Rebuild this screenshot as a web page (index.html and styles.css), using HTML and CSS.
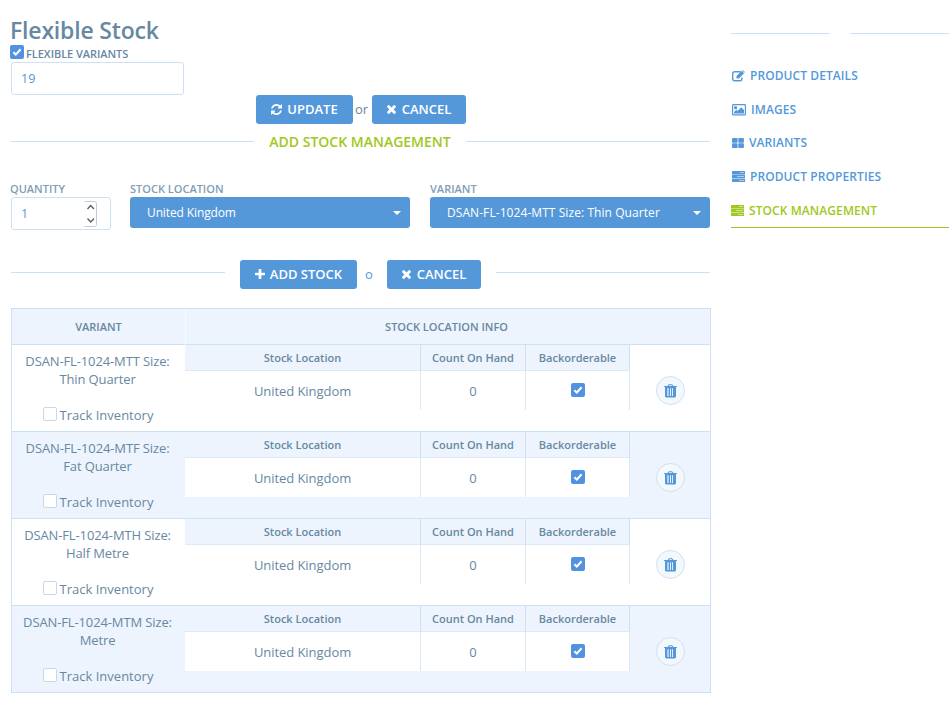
FILE: index.html
```html
<!DOCTYPE html>
<html lang="en">
<head>
<meta charset="utf-8">
<title>Flexible Stock</title>
<link rel="stylesheet" href="styles.css">
</head>
<body>
<svg class="defs" width="0" height="0">
  <symbol id="refresh" viewBox="128 128 1536 1536"><path d="M1639 1056q0 5-1 7-64 268-268 434.5t-478 166.5q-146 0-282.5-55t-243.5-157l-129 129q-19 19-45 19t-45-19-19-45v-448q0-26 19-45t45-19h448q26 0 45 19t19 45-19 45l-137 137q71 66 161 102t187 36q134 0 250-65t186-179q11-17 53-117 8-23 30-23h192q13 0 22.5 9.5t9.500 22.500zm25-800v448q0 26-19 45t-45 19h-448q-26 0-45-19t-19-45 19-45l138-138q-148-137-349-137-134 0-250 65t-186 179q-11 17-53 117-8 23-30 23h-199q-13 0-22.500-9.500t-9.500-22.500v-7q65-268 270-434.500t480-166.500q146 0 284 55.500t245 156.500l130-129q19-19 45-19t45 19 19 45z"/></symbol>
  <symbol id="times" viewBox="302 366 1188 1188"><path d="M1490 1322q0 40-28 68l-136 136q-28 28-68 28t-68-28l-294-294-294 294q-28 28-68 28t-68-28l-136-136q-28-28-28-68t28-68l294-294-294-294q-28-28-28-68t28-68l136-136q28-28 68-28t68 28l294 294 294-294q28-28 68-28t68 28l136 136q28 28 28 68t-28 68l-294 294 294 294q28 28 28 68z"/></symbol>
  <symbol id="plus" viewBox="0 0 11 11"><path d="M4.700 0h1.600q.7 0 .7.700V4h3.300q.7 0 .7.700v1.600q0 .7-.7.700H7v3.300q0 .7-.7.700H4.700q-.7 0-.7-.7V7H.7Q0 7 0 6.300V4.700Q0 4 .7 4H4V.7Q4 0 4.700 0z"/></symbol>
  <symbol id="edit" viewBox="0 0 13 12"><path d="M8.600 1.700H2.700Q.7 1.700.7 3.700v5Q.7 10.700 2.700 10.700h5.200q2 0 2-2V7.500" fill="none" stroke="currentColor" stroke-width="1.400"/><path d="M4.500 6 9.700.8l2.400 2.400-5.200 5.200H4.500zM10.300.5q.6-.5 1.100 0l1.200 1.200q.5.500 0 1.100z"/></symbol>
  <symbol id="image" viewBox="0 0 14 12"><path fill-rule="evenodd" d="M1.200 0h11.600Q14 0 14 1.200v9.100q0 1.200-1.200 1.200H1.200Q0 11.500 0 10.300V1.200Q0 0 1.200 0zM1.200 1.200v9.100h11.600V1.200z"/><circle cx="3.600" cy="3.700" r="1.600"/><path d="M2 9.500V8l2.300-2.300L5.500 7l3.700-3.800L12 6v3.500z"/></symbol>
  <symbol id="variants" viewBox="0 0 12 10"><rect width="5.600" height="4.700" rx=".8"/><rect x="6.300" width="5.600" height="4.700" rx=".8"/><rect y="5.300" width="5.600" height="4.700" rx=".8"/><rect x="6.300" y="5.300" width="5.600" height="4.700" rx=".8"/></symbol>
  <symbol id="tasks" viewBox="0 0 13 11"><rect width="13" height="3.400" rx=".5"/><rect y="3.800" width="13" height="3.300" rx=".5"/><rect y="7.500" width="13" height="3.400" rx=".5"/><path d="M8 1.500h4v.5H8zM5 5.200h7v.5H5zM7 9h5v.5H7z" fill="#fff"/></symbol>
  <symbol id="trash" viewBox="0 0 13 14"><path fill-rule="evenodd" d="M.5 2h3.200L4.400.700Q4.700.200 5.300.200h2.400q.6 0 .9.500L9.300 2h3.200q.5 0 .5.500t-.5.600H12v9q0 1.400-1.200 1.400H2.200Q1 13.500 1 12.100v-9H.5Q0 3 0 2.500T.5 2zm4.400 0h3.200l-.4-.8H5.300zM6 4.300V12h.9V4.300zM8 4.300V12h.9V4.300z"/><path d="M3 4.300h2V12H3z" fill="#b0d0ef"/></symbol>
  <symbol id="check" viewBox="0 0 14 14"><path d="M3.400 7.200 5.800 9.600 10.600 4.300" fill="none" stroke="#fff" stroke-width="2.100"/></symbol>
</svg>
<div class="page">
  <main class="content">
    <h1>Flexible Stock</h1>
    <label class="flexible"><span class="box on"><svg><use href="#check"/></svg></span><span>FLEXIBLE VARIANTS</span></label>
    <div class="field wide">19</div>
    <div class="actions"><a class="btn update"><svg class="i12"><use href="#refresh"/></svg><span>UPDATE</span></a><span class="or">or</span><a class="btn cancel"><svg class="i10"><use href="#times"/></svg><span>CANCEL</span></a></div>
    <div class="legend"><span>ADD STOCK MANAGEMENT</span></div>
    <div class="form">
      <div class="quantity"><label>QUANTITY</label><div class="field"><span>1</span><svg class="spin" viewBox="0 0 14 26"><path d="M.5.500h10Q12.500.500 12.500 2.500v21q0 2-2 2H.5" fill="none" stroke="#c8c9d8"/><path d="m3.500 8 3.200-3.500L10 8M3.500 17.500l3.200 3.500 3.300-3.500" fill="none" stroke="#5c5c69" stroke-width="1.300"/></svg></div></div>
      <div class="choice"><label>STOCK LOCATION</label><div class="select location"><span>United Kingdom</span><i></i></div></div>
      <div class="choice"><label>VARIANT</label><div class="select"><span>DSAN-FL-1024-MTT Size: Thin Quarter</span><i></i></div></div>
    </div>
    <div class="add"><a class="btn stock"><svg class="i11"><use href="#plus"/></svg><span>ADD STOCK</span></a><span class="o">o</span><a class="btn cancel"><svg class="i10"><use href="#times"/></svg><span>CANCEL</span></a></div>
    <section class="table">
      <div class="head"><div>VARIANT</div><div>STOCK LOCATION INFO</div></div>
      <div class="row">
        <div class="variant">DSAN-FL-1024-MTT Size:<br>Thin Quarter<label><span class="box"></span><span>Track Inventory</span></label></div>
        <div class="info"><b>Stock Location</b><b>Count On Hand</b><b>Backorderable</b><div>United Kingdom</div><div>0</div><div><span class="box on"><svg><use href="#check"/></svg></span></div></div>
        <div class="remove"><a><svg><use href="#trash"/></svg></a></div>
      </div>
      <div class="row">
        <div class="variant">DSAN-FL-1024-MTF Size:<br>Fat Quarter<label><span class="box"></span><span>Track Inventory</span></label></div>
        <div class="info"><b>Stock Location</b><b>Count On Hand</b><b>Backorderable</b><div>United Kingdom</div><div>0</div><div><span class="box on"><svg><use href="#check"/></svg></span></div></div>
        <div class="remove"><a><svg><use href="#trash"/></svg></a></div>
      </div>
      <div class="row">
        <div class="variant">DSAN-FL-1024-MTH Size:<br>Half Metre<label><span class="box"></span><span>Track Inventory</span></label></div>
        <div class="info"><b>Stock Location</b><b>Count On Hand</b><b>Backorderable</b><div>United Kingdom</div><div>0</div><div><span class="box on"><svg><use href="#check"/></svg></span></div></div>
        <div class="remove"><a><svg><use href="#trash"/></svg></a></div>
      </div>
      <div class="row">
        <div class="variant">DSAN-FL-1024-MTM Size:<br>Metre<label><span class="box"></span><span>Track Inventory</span></label></div>
        <div class="info"><b>Stock Location</b><b>Count On Hand</b><b>Backorderable</b><div>United Kingdom</div><div>0</div><div><span class="box on"><svg><use href="#check"/></svg></span></div></div>
        <div class="remove"><a><svg><use href="#trash"/></svg></a></div>
      </div>
    </section>
  </main>
  <aside>
    <div class="rule"></div>
    <nav>
      <a><svg width="13" height="12"><use href="#edit"/></svg>PRODUCT DETAILS</a>
      <a><svg width="14" height="12"><use href="#image"/></svg>IMAGES</a>
      <a><svg width="12" height="10"><use href="#variants"/></svg>VARIANTS</a>
      <a><svg width="13" height="11"><use href="#tasks"/></svg>PRODUCT PROPERTIES</a>
      <a class="active"><svg width="13" height="11"><use href="#tasks"/></svg>STOCK MANAGEMENT</a>
    </nav>
  </aside>
</div>
</body>
</html>
```
FILE: styles.css
```css
* { box-sizing: border-box; }
body { margin: 0; background: #fff; color: #6788a2; font: 13px/18px "Open Sans", sans-serif; }
svg { fill: currentColor; flex: none; }
.defs { position: absolute; }
.page { display: grid; grid-template-columns: 701px 218px; column-gap: 20px; padding-left: 10px; height: 708px; overflow: hidden; }
.content { padding-top: 15px; }
h1 { margin: 0; font-size: 23px; line-height: 30px; font-weight: 600; letter-spacing: -.18px; }
.box { display: inline-block; width: 14px; height: 14px; flex: none; border: 1px solid #cdd5e8; border-radius: 2px; background: #fff; }
.box.on { background: #5292e3; border: 0; }
.box svg { display: block; width: 14px; height: 14px; }
.flexible { display: flex; gap: 2px; height: 17px; font-size: 11px; font-weight: 600; line-height: 18px; letter-spacing: -.05px; }
.field { height: 33px; margin-left: 1px; border: 1px solid #cee1f4; border-radius: 3px; color: #5498da; padding-left: 9px; font-size: 12.500px; line-height: 31px; }
.wide { width: 173px; }
.actions { display: flex; margin-left: 246px; height: 29px; }
.btn { display: flex; align-items: center; justify-content: center; height: 29px; background: #5498da; color: #fff; border-radius: 3px; font-weight: 600; gap: 5px; }
.btn span { padding-bottom: 1px; line-height: 17px; }
.i10 { width: 9px; height: 9px; margin-right: 1px; }
.i11 { width: 10px; height: 10px; margin-bottom: 1px; }
.i12 { width: 11px; height: 11px; }
.update { width: 97px; }
.cancel { width: 94px; }
.or { width: 19px; text-align: center; line-height: 28px; padding-right: 2px; }
.legend { display: grid; grid-template-columns: 243px 212px 244px; align-items: center; height: 35px; margin-left: 1px; color: #9fc820; font-size: 14px; font-weight: 600; text-align: center; }
.legend::before, .legend::after { content: ""; height: 1px; background: #cee1f4; }
.form { display: grid; grid-template-columns: 100px 280px 280px; column-gap: 20px; height: 101px; padding-top: 21px; }
.form label { display: block; height: 17px; line-height: 18px; font-size: 11px; font-weight: 600; color: #7f9db5; }
.quantity .field { width: 100px; display: flex; justify-content: space-between; align-items: center; padding-right: 12px; }
.spin { width: 14px; height: 26px; }
.select { height: 31px; display: flex; justify-content: space-between; align-items: center; padding: 0 9px 0 17px; background: #5498da; color: #fff; border-radius: 3px; font-size: 12px; letter-spacing: .07px; }
.location { letter-spacing: -.12px; }
.select i { border: 4px solid transparent; border-top-color: #fff; border-bottom: 0; }
.add { display: grid; grid-template-columns: 214px 15px 117px 30px 94px 15px 214px; align-items: center; height: 29px; margin-left: 1px; }
.add::before, .add::after { content: ""; height: 1px; background: #cee1f4; margin-bottom: 4px; }
.add::after { grid-column: 7; }
.stock { grid-column: 3; }
.o { color: #5498da; padding: 0 0 1px 8px; }
.table { width: 700px; margin: 19px 0 0 1px; border: 1px solid #cee1f4; }
.head { display: grid; grid-template-columns: 174px 524px; height: 35px; text-align: center; line-height: 36px; font-size: 11px; font-weight: 600; background: #edf4fd; }
.head div:first-child { border-right: 1px solid #f7fafe; }
.head div:last-child { padding-right: 3px; }
.row { display: grid; grid-template-columns: 173px 445px 80px; height: 87px; border-top: 1px solid #cee1f4; }
.row:nth-child(odd) { background: #edf4fd; }
.variant { text-align: center; padding: 7px 2px 0 0; letter-spacing: -.12px; }
.variant label { display: flex; justify-content: center; align-items: flex-start; gap: 3px; padding: 18px 0 0 1px; letter-spacing: 0; }
.variant .box { margin-top: 1px; }
.info { display: grid; grid-template-columns: 236px 105px 104px; grid-template-rows: 26px 39px; text-align: center; }
.info > * { border-right: 1px solid #dce9f7; }
.info b { font-size: 11px; line-height: 26px; font-weight: 600; background: #edf4fd; border-bottom: 1px solid #dce9f7; border-right-color: #cee1f4; }
.info > div { line-height: 41px; background: #fff; letter-spacing: -.06px; }
.info .box { display: block; margin: 12px auto 0; }
.remove { padding: 31px 0 0 26px; }
.remove a { display: flex; align-items: center; justify-content: center; width: 29px; height: 29px; padding-top: 1px; border: 1px solid #cee1f4; border-radius: 50%; background: #f3f8fd; color: #5498da; }
.remove svg { width: 13px; height: 14px; }
aside { padding-top: 33px; }
.rule { display: flex; justify-content: space-between; height: 1px; }
.rule::before, .rule::after { content: ""; width: 99px; background: #cee1f4; }
nav { padding-top: 25px; }
nav a { display: flex; align-items: center; height: 33.700px; gap: 5px; padding-left: 1px; color: #5498da; font-size: 12px; font-weight: 600; letter-spacing: .08px; }
nav .active { color: #9fc820; padding: 1px 0 0; border-bottom: 1px solid #9fc820; height: 34px; }
```
